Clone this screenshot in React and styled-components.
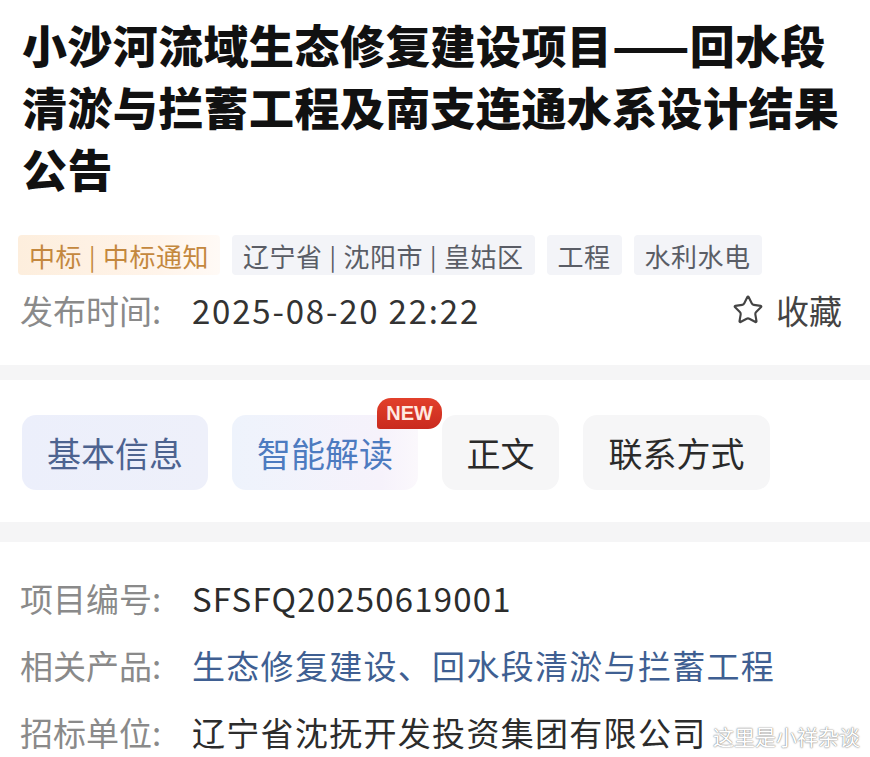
import React from "react";
import styled, { createGlobalStyle } from "styled-components";
import { Star } from "lucide-react";

const GlobalStyle = createGlobalStyle`
  body {
    margin: 0;
    background: #ffffff;
    font-family: "Noto Sans CJK SC", "Noto Sans", sans-serif;
    color: #222;
  }
`;

const Page = styled.div`
  position: relative;
  width: 870px;
  height: 757px;
  overflow: hidden;
  background: #fff;
`;

const Header = styled.section`
  padding: 14px 22px 0 20px;
  height: 365px;
  box-sizing: border-box;
`;

const Title = styled.h1`
  margin: 0 0 0 2px;
  font-size: 45px;
  line-height: 62px;
  font-weight: 900;
  color: #111;
  letter-spacing: 0.4px;
`;

const TagRow = styled.div`
  display: flex;
  gap: 12px;
  margin-top: 35px;
  margin-left: -2px;
`;

const Tag = styled.span`
  display: inline-flex;
  align-items: center;
  height: 40px;
  padding: 0 11px;
  font-size: 26px;
  letter-spacing: 0.5px;
  border-radius: 4px;
  color: ${(p) => (p.$accent ? "#c4883e" : "#5a5d66")};
  background: ${(p) =>
    p.$accent
      ? "linear-gradient(90deg, #fdeedd 0%, #fff4ea 70%, #fffaf6 100%)"
      : "#f3f4f8"};
`;

const Bar = styled.span`
  margin: 0 7px;
  font-size: 24px;
`;

const MetaRow = styled.div`
  display: flex;
  align-items: center;
  height: 40px;
  margin-top: 15px;
`;

const MetaLabel = styled.span`
  font-size: 33px;
  color: #8a8a8a;
  width: 172px;
`;

const MetaValue = styled.span`
  font-size: 33px;
  color: #333;
  letter-spacing: 1.8px;
  flex: 1;
`;

const Favorite = styled.span`
  display: inline-flex;
  align-items: center;
  gap: 12px;
  font-size: 33px;
  color: #444;
  margin-right: 6px;
`;

const Band = styled.div`
  height: ${(p) => p.$h}px;
  background: #f5f5f6;
`;

const TabBar = styled.nav`
  display: flex;
  gap: 24px;
  padding: 35px 22px 32px;
`;

const Tab = styled.div`
  position: relative;
  display: flex;
  align-items: center;
  justify-content: center;
  height: 75px;
  padding: 0 20px;
  min-width: ${(p) => p.$w || 0}px;
  box-sizing: border-box;
  border-radius: 14px;
  font-size: 34px;
  color: ${(p) => p.$color || "#2a2a2a"};
  background: ${(p) => p.$bg || "#f6f6f7"};
`;

const NewBadge = styled.span`
  position: absolute;
  top: -17px;
  right: -24px;
  padding: 0 9px;
  height: 31px;
  line-height: 31px;
  font-family: "Liberation Sans", Arial, sans-serif;
  font-size: 20px;
  font-weight: 700;
  color: #ffe9e0;
  background: linear-gradient(180deg, #e2402b, #c92a1e);
  border-radius: 14px 14px 14px 3px;
`;

const Info = styled.section`
  display: flex;
  flex-direction: column;
  gap: 34px;
  padding: 40px 20px 0;
`;

const InfoRow = styled.div`
  display: flex;
  align-items: center;
  font-size: 33px;
  line-height: 33px;
`;

const InfoLabel = styled.span`
  color: #8a8a8a;
  width: 172px;
  flex-shrink: 0;
`;

const InfoValue = styled.span`
  color: ${(p) => p.$color || "#2c2c2c"};
  letter-spacing: ${(p) => p.$ls || 1.3}px;
`;

const Watermark = styled.span`
  position: absolute;
  right: 10px;
  bottom: 8px;
  font-size: 21px;
  line-height: 1.2;
  color: #fff;
  text-shadow: 0 0 1px #777, 0 0 2px #999;
`;

export default function App() {
  return (
    <Page>
      <GlobalStyle />
      <Header>
        <Title>
          小沙河流域生态修复建设项目——回水段清淤与拦蓄工程及南支连通水系设计结果公告
        </Title>
        <TagRow>
          <Tag $accent>
            中标<Bar>|</Bar>中标通知
          </Tag>
          <Tag>
            辽宁省<Bar>|</Bar>沈阳市<Bar>|</Bar>皇姑区
          </Tag>
          <Tag>工程</Tag>
          <Tag>水利水电</Tag>
        </TagRow>
        <MetaRow>
          <MetaLabel>发布时间:</MetaLabel>
          <MetaValue>2025-08-20 22:22</MetaValue>
          <Favorite>
            <Star size={32} strokeWidth={1.6} color="#444" />
            收藏
          </Favorite>
        </MetaRow>
      </Header>
      <Band $h={15} />
      <TabBar>
        <Tab $w={186} $color="#4d6390" $bg="linear-gradient(90deg, #eceffb, #eef0fa)">
          基本信息
        </Tab>
        <Tab
          $w={186}
          $color="#4d7bc0"
          $bg="linear-gradient(90deg, #eef3fc, #f6f2fb 80%, #fbf8fc)"
        >
          智能解读
          <NewBadge>NEW</NewBadge>
        </Tab>
        <Tab $w={117}>正文</Tab>
        <Tab $w={187}>联系方式</Tab>
      </TabBar>
      <Band $h={20} />
      <Info>
        <InfoRow>
          <InfoLabel>项目编号:</InfoLabel>
          <InfoValue $ls={1.2}>SFSFQ20250619001</InfoValue>
        </InfoRow>
        <InfoRow>
          <InfoLabel>相关产品:</InfoLabel>
          <InfoValue $color="#3f5f92">生态修复建设、回水段清淤与拦蓄工程</InfoValue>
        </InfoRow>
        <InfoRow>
          <InfoLabel>招标单位:</InfoLabel>
          <InfoValue>辽宁省沈抚开发投资集团有限公司</InfoValue>
        </InfoRow>
      </Info>
      <Watermark>这里是小祥杂谈</Watermark>
    </Page>
  );
}
